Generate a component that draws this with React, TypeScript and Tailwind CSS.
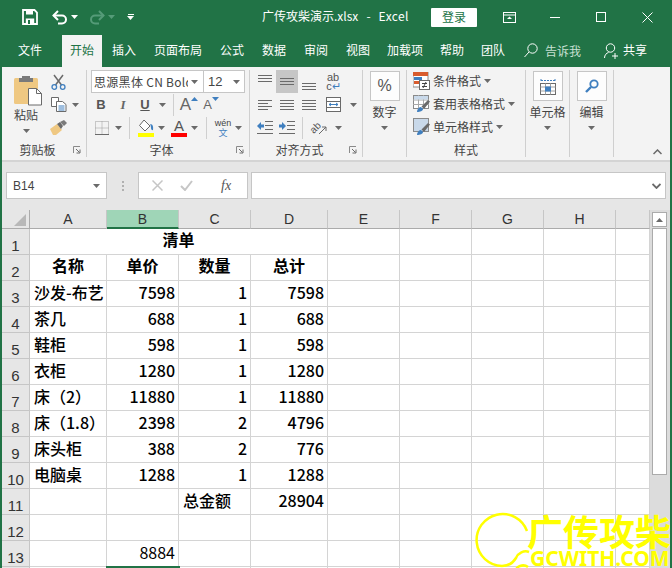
import React from "react";

const Caret = ({ c = "#6a6a6a", className = "" }: { c?: string; className?: string }) => (
  <svg width="7" height="4" viewBox="0 0 7 4" className={`shrink-0 ${className}`}><path d="M0 0h7L3.5 4z" fill={c} /></svg>
);

const Lines = ({ rows }: { rows: [number, number][] }) => (
  <svg width="14" height="16" viewBox="0 0 14 16">
    {rows.map(([y, w], i) => (
      <rect key={i} x={0} y={y} width={w} height="1" fill="#6a6a6a" />
    ))}
  </svg>
);

const Launcher = () => (
  <svg width="8" height="8" viewBox="0 0 8 8">
    <path d="M0.5 7V0.5H7" stroke="#8a8a8a" fill="none" />
    <path d="M3 3l3.5 3.5M3.5 7H7V3.5" stroke="#6a6a6a" fill="none" />
  </svg>
);

const Save = () => (
  <svg width="16" height="16" viewBox="0 0 16 16" fill="none">
    <path d="M1 1h11.5L15 3.5V15H1z" stroke="#fff" strokeWidth="1.8" />
    <rect x="4" y="1" width="7" height="4.5" fill="#fff" />
    <rect x="3.8" y="9.5" width="8.4" height="5.5" fill="#fff" />
    <rect x="6" y="11" width="2" height="4" fill="#217346" />
  </svg>
);

const Undo = ({ c, flip }: { c: string; flip?: boolean }) => (
  <svg width="16" height="15" viewBox="0 0 16 15" fill="none" className={flip ? "-scale-x-100" : ""}>
    <path d="M1.5 5.5H10a4 4 0 0 1 0 8H6" stroke={c} strokeWidth="2" />
    <path d="M6 1L1.5 5.5 6 10" stroke={c} strokeWidth="2" />
  </svg>
);

const Paste = () => (
  <svg width="29" height="31" viewBox="0 0 29 31">
    <rect x="0" y="3" width="24" height="26" rx="1.5" fill="#efc882" />
    <path d="M8 3V1h8v2h3v4H5V3z" fill="#7a7a7a" />
    <path d="M14.5 13.5h8l5 5v11.5h-13z" fill="#fff" stroke="#6a6a6a" />
    <path d="M22.5 13.5v5h5" fill="none" stroke="#6a6a6a" />
  </svg>
);

const Scissors = () => (
  <svg width="15" height="16" viewBox="0 0 15 16" fill="none">
    <path d="M3 1l7.5 10M12 1L4.5 11" stroke="#6a6a6a" strokeWidth="1.5" />
    <circle cx="3.3" cy="13" r="2.3" stroke="#3f7fbf" strokeWidth="1.3" />
    <circle cx="11.7" cy="13" r="2.3" stroke="#3f7fbf" strokeWidth="1.3" />
  </svg>
);

const Copy = () => (
  <svg width="16" height="15" viewBox="0 0 16 15" fill="none">
    <path d="M0.5 0.5h7v9h-7z" fill="#fff" stroke="#6a6a6a" />
    <path d="M5.5 4.5h6l3.5 3v7h-9.500z" fill="#fff" stroke="#6a6a6a" />
    <path d="M7.500 9h6M7.500 11h6M7.500 13h6" stroke="#3f7fbf" />
  </svg>
);

const Brush = () => (
  <svg width="17" height="15" viewBox="0 0 17 15">
    <path d="M0 9l7-5 5 6-6 5H3z" fill="#efc882" />
    <path d="M7 4l3-2 3 4-2 3z" fill="#6a6a6a" />
    <path d="M10 2l4-2 3 3-3 3z" fill="#7a7a7a" />
  </svg>
);

const BordersIcon = () => (
  <svg width="14" height="14" viewBox="0 0 14 14" fill="none">
    <path d="M.5.5h13v13H.5zM7 .5v13M.5 7h13" stroke="#9a9a9a" strokeDasharray="1 1" />
    <path d="M0 13.500h14" stroke="#6a6a6a" />
  </svg>
);

const FillColor = () => (
  <svg width="16" height="18" viewBox="0 0 16 18">
    <path d="M6 1l6 6-5 5-5.500-5.500z" fill="#fff" stroke="#6a6a6a" />
    <path d="M12 5c3 0 3.500 3 3 6-1 .5-2-.5-2-2 0-1.500-.5-3-1-4z" fill="#3f7fbf" />
    <rect x="0" y="14" width="16" height="4" fill="#ffff00" />
  </svg>
);

const Arrow = ({ dir }: { dir: "l" | "r" }) => (
  <svg width="16" height="13" viewBox="0 0 16 13">
    <path d="M8 0.500h8M8 4.500h8M8 8.500h8M0 12.500h16" stroke="#6a6a6a" />
    <path d={dir === "l" ? "M0 5l4-4v2.500h3v3H4V9z" : "M7 5L3 1v2.500H0v3h3V9z"} fill="#3f7fbf" />
  </svg>
);

const Merge = () => (
  <svg width="15" height="15" viewBox="0 0 15 15" fill="none">
    <rect x=".5" y=".5" width="14" height="14" fill="#fff" stroke="#6a6a6a" />
    <path d="M0 4.500h15M0 10.500h15" stroke="#6a6a6a" />
    <path d="M3 7.500h9M3 7.500l2-1.500M3 7.500l2 1.500M12 7.500l-2-1.500M12 7.500l-2 1.500" stroke="#3f7fbf" />
  </svg>
);

const Cond = () => (
  <svg width="17" height="18" viewBox="0 0 17 18">
    <rect x="0" y="0" width="15" height="15" fill="#fff" stroke="#8a8a8a" />
    <rect x="0" y="0" width="15" height="4" fill="#d85c2e" />
    <rect x="1" y="5" width="8" height="3" fill="#3f7fbf" />
    <rect x="1" y="9" width="5" height="3" fill="#d85c2e" />
    <rect x="6.500" y="8.500" width="10" height="9" fill="#fff" stroke="#6a6a6a" />
    <path d="M9 11.500h5M9 14.500h5M10 16l3-6" stroke="#444" fill="none" />
  </svg>
);

const TableBrush = ({ light }: { light?: boolean }) => (
  <svg width="18" height="18" viewBox="0 0 18 18">
    <rect x=".5" y=".5" width="15" height="13" fill={light ? "#c9d9ea" : "#fff"} stroke="#8a8a8a" />
    {!light && <path d="M5.500 0v14M10.500 0v14M0 5h16M0 9.500h16" stroke="#a8a8a8" />}
    {!light && <rect x="1" y="1" width="14" height="3.500" fill="#c9d9ea" />}
    <path d="M4 17c0-3 2-5 4-5l2 2c0 2-3 3-6 3z" fill="#3f7fbf" />
    <path d="M8.500 11.500L15 5l2 1.500-6 7.500z" fill="#6a6a6a" />
  </svg>
);

const CellsIcon = () => (
  <svg width="16" height="17" viewBox="0 0 16 17" fill="none">
    <path d="M1 1v3M15 1v3M1 2.500h14" stroke="#3f7fbf" strokeDasharray="2 1" />
    <rect x=".5" y="5.500" width="15" height="11" fill="#fff" stroke="#6a6a6a" />
    <path d="M.5 9h15M.5 13h15M5.500 5.500v11M10.500 5.500v11" stroke="#a0a0a0" />
    <rect x="5" y="8.500" width="6" height="5" fill="#3f7fbf" />
  </svg>
);

const Magnifier = () => (
  <svg width="14" height="14" viewBox="0 0 14 14" fill="none">
    <circle cx="9" cy="5" r="3.700" stroke="#3f7fbf" strokeWidth="1.800" />
    <path d="M6 8L1 13" stroke="#3f7fbf" strokeWidth="2.400" />
  </svg>
);

const Group = ({ w, children, label, launcher }: { w: string; children: React.ReactNode; label?: string; launcher?: boolean }) => (
  <div className={`${w} h-[87px] shrink-0 flex flex-col border-r border-[#cfcfcf]`}>
    <div className="h-[69px] flex">{children}</div>
    <div className="h-[18px] pt-[4px] flex items-center text-[12px] text-[#444]">
      <span className="flex-1 text-center leading-none">{label}</span>
      {launcher && <span className="mr-[5px] flex"><Launcher /></span>}
    </div>
  </div>
);

const BigButton = ({ w, label, children, pad = "pl-0" }: { w: string; label: string; children: React.ReactNode; pad?: string }) => (
  <div className={`${w} ${pad} flex flex-col items-center`}>
    <div className="w-[30px] h-[30px] mt-[1px] bg-[#fdfdfd] border border-[#c6c6c6] flex items-center justify-center">{children}</div>
    <div className="mt-[2px] text-[12px] leading-[18px] text-[#444] whitespace-nowrap">{label}</div>
    <Caret className="mt-[5px]" />
  </div>
);

const Slot = ({ w, children, bg = "" }: { w: string; children?: React.ReactNode; bg?: string }) => (
  <div className={`${w} ${bg} h-[23px] flex items-center justify-center shrink-0`}>{children}</div>
);

const VSep = () => <div className="w-px h-[22px] bg-[#cfcfcf] shrink-0" />;

const Tab = ({ t, cls }: { t: string; cls: string }) => (
  <div className={`${cls} h-[33px] pb-[2px] flex items-center shrink-0 text-white text-[12px] leading-none`}>{t}</div>
);

const StyleRow = ({ icon, t }: { icon: React.ReactNode; t: string }) => (
  <div className="h-[23px] flex items-center">
    <span className="w-[20px] flex shrink-0">{icon}</span>
    <span className="text-[12px] text-[#444] whitespace-nowrap">{t}</span>
    <Caret className="ml-[3px]" />
  </div>
);

const rows: [string, string, string, string][] = [
  ["沙发-布艺", "7598", "1", "7598"],
  ["茶几", "688", "1", "688"],
  ["鞋柜", "598", "1", "598"],
  ["衣柜", "1280", "1", "1280"],
  ["床（2）", "11880", "1", "11880"],
  ["床（1.8）", "2398", "2", "4796"],
  ["床头柜", "388", "2", "776"],
  ["电脑桌", "1288", "1", "1288"],
];

const cell = "h-[26px] bg-white border-r border-b border-[#d4d4d4] flex items-center text-[16px] text-black whitespace-nowrap leading-none";
const L = `${cell} pb-[4px] pl-[4px] font-medium`;
const R = `${cell} pb-[4px] justify-end pr-[3px] font-medium`;
const C = `${cell} pb-[6px] justify-center font-bold`;
const RowH = ({ n }: { n: number }) => (
  <div className="h-[26px] bg-[#e6e6e6] border-r border-b border-[#c6c6c6] flex items-end justify-center text-[15px] leading-[17px] text-[#333] font-['Liberation_Sans',sans-serif]">{n}</div>
);
const ColH = ({ t, sel }: { t: string; sel?: boolean }) => (
  <div className={`h-[19px] flex items-center justify-center text-[14px] leading-none font-['Liberation_Sans',sans-serif] text-[#333] border-b ${sel ? "bg-[#9fd5b7] border-b-2 border-b-[#217346] border-r border-r-[#c6c6c6]" : "bg-[#e6e6e6] border-b-[#ababab] border-r border-r-[#c6c6c6]"}`}>{t}</div>
);
const Blank = () => <div className={cell} />;
const BlankRest = () => (
  <>
    <Blank /><Blank /><Blank /><Blank /><Blank />
  </>
);

export default function App() {
  return (
    <div className="relative w-[672px] h-[568px] overflow-hidden bg-[#e6e6e6] border-x-2 border-[#217346] font-['Noto_Sans_CJK_SC','Liberation_Sans',sans-serif]">
      {/* Title bar */}
      <div className="h-[34px] -mx-[2px] bg-[#217346] flex items-center text-white">
        <div className="ml-[22px] flex"><Save /></div>
        <div className="ml-[14px] flex"><Undo c="#fff" /></div>
        <Caret c="#fff" className="ml-[3px]" />
        <div className="ml-[11px] flex"><Undo c="#559b78" flip /></div>
        <Caret c="#559b78" className="ml-[3px]" />
        <div className="ml-[12px] flex flex-col items-center gap-[1px]">
          <div className="w-[6px] h-px bg-white" />
          <Caret c="#fff" />
        </div>
        <div className="ml-[128px] w-[165px] pb-[2px] text-[12px] whitespace-pre leading-none">广传攻柴演示.xlsx   -   <span className="tracking-[0.4px]">Excel</span></div>
        <div className="ml-[4px] w-[46px] h-[19px] bg-white text-[#217346] text-[12px] rounded-[1px] flex items-center justify-center">登录</div>
        <div className="ml-[10px] w-[45px] flex justify-center">
          <svg width="13" height="11" viewBox="0 0 13 11" fill="none"><rect x=".5" y=".5" width="12" height="10" stroke="#fff" /><path d="M0 3h13" stroke="#fff" /><path d="M6.500 4.500l-2.500 2.500h5z" fill="#fff" /></svg>
        </div>
        <div className="w-[46px] flex justify-center"><div className="w-[10px] h-px bg-white" /></div>
        <div className="w-[46px] flex justify-center"><div className="w-[10px] h-[10px] border border-white" /></div>
        <div className="w-[46px] flex justify-center">
          <svg width="11" height="11" viewBox="0 0 11 11"><path d="M.5.5l10 10M10.500.5l-10 10" stroke="#fff" /></svg>
        </div>
      </div>
      {/* Tabs */}
      <div className="h-[33px] -mx-[2px] bg-[#217346] flex items-center">
        <Tab t="文件" cls="ml-[18px] w-[24px]" />
        <div className="ml-[20px] w-[40px] h-[32px] mt-[1px] pb-[2px] bg-[#f3f3f3] text-[#217346] text-[12px] flex items-center justify-center leading-none shrink-0">开始</div>
        <Tab t="插入" cls="ml-[10px] w-[24px]" />
        <Tab t="页面布局" cls="ml-[18px] w-[48px]" />
        <Tab t="公式" cls="ml-[18px] w-[24px]" />
        <Tab t="数据" cls="ml-[18px] w-[24px]" />
        <Tab t="审阅" cls="ml-[18px] w-[24px]" />
        <Tab t="视图" cls="ml-[18px] w-[24px]" />
        <Tab t="加载项" cls="ml-[17px] w-[36px]" />
        <Tab t="帮助" cls="ml-[17px] w-[24px]" />
        <Tab t="团队" cls="ml-[17px] w-[24px]" />
        <svg width="14" height="15" viewBox="0 0 14 15" fill="none" className="ml-[19px] shrink-0"><circle cx="8.500" cy="5.500" r="4.700" stroke="#fff" /><path d="M5 9L.5 14" stroke="#fff" /></svg>
        <div className="ml-[7px] w-[36px] text-[12px] leading-none text-[#c8e0d3] shrink-0">告诉我</div>
        <svg width="15" height="16" viewBox="0 0 15 16" fill="none" className="ml-[23px] shrink-0"><circle cx="6.500" cy="5" r="4.200" stroke="#fff" /><path d="M.5 15c0-3 2-5 4-5.500M8 13h6M11 10v6" stroke="#fff" /></svg>
        <div className="ml-[4px] w-[24px] pb-[2px] text-[12px] leading-none text-white shrink-0">共享</div>
      </div>
      {/* Ribbon */}
      <div className="h-[95px] bg-[#f3f3f3] border-b-2 border-[#d4d4d4] pt-[3px] flex">
        <Group w="w-[85px]" label="剪贴板" launcher>
          <div className="w-[48px] flex flex-col items-center">
            <div className="mt-[5px] ml-[5px] flex"><Paste /></div>
            <div className="text-[12px] leading-[18px] text-[#444]">粘贴</div>
            <Caret className="mt-[5px]" />
          </div>
          <div className="flex flex-col">
            <Slot w="w-[17px]"><Scissors /></Slot>
            <div className="flex items-center">
              <Slot w="w-[17px]"><Copy /></Slot>
              <Caret className="ml-[5px]" />
            </div>
            <Slot w="w-[17px]"><Brush /></Slot>
          </div>
        </Group>
        <Group w="w-[163px]" label="字体" launcher>
          <div className="flex flex-col">
            <div className="ml-[4px] h-[23px] flex">
              <div className="w-[113px] h-full bg-white border border-[#c6c6c6] flex items-center text-[12px] text-[#444]">
                <span className="w-[96px] pl-[2px] overflow-hidden whitespace-nowrap tracking-[0.3px]">思源黑体 CN Bold</span>
                <Caret className="ml-[3px]" />
              </div>
              <div className="w-[41px] h-full bg-white border border-[#c6c6c6] border-l-0 flex items-center justify-between px-[4px] text-[13px] text-[#444] font-['Liberation_Sans',sans-serif]">
                12<Caret />
              </div>
            </div>
            <div className="h-[23px] flex items-center">
              <Slot w="ml-[3px] w-[22px]"><span className="text-[13px] font-bold text-[#555] font-['Liberation_Sans',sans-serif]">B</span></Slot>
              <Slot w="w-[22px]"><span className="text-[13px] italic font-bold font-['Liberation_Serif',serif] text-[#666]">I</span></Slot>
              <Slot w="w-[22px]"><span className="text-[13px] font-bold underline text-[#555] font-['Liberation_Sans',sans-serif]">U</span></Slot>
              <Caret className="ml-[3px]" />
              <div className="ml-[7px]"><VSep /></div>
              <Slot w="w-[30px]">
                <span className="text-[17px] text-[#666] font-['Liberation_Sans',sans-serif]">A</span>
                <svg width="7" height="4" viewBox="0 0 7 4" className="mb-[12px]"><path d="M0 4h7L3.500 0z" fill="#3f7fbf" /></svg>
              </Slot>
              <Slot w="w-[14px]">
                <span className="text-[13px] text-[#666] font-['Liberation_Sans',sans-serif]">A</span>
                <svg width="7" height="4" viewBox="0 0 7 4" className="mb-[12px] shrink-0"><path d="M0 0h7L3.500 4z" fill="#3f7fbf" /></svg>
              </Slot>
            </div>
            <div className="h-[23px] flex items-center">
              <div className="ml-[8px] w-[14px] flex"><BordersIcon /></div>
              <Caret className="ml-[6px]" />
              <div className="ml-[7px]"><VSep /></div>
              <div className="ml-[8px] flex"><FillColor /></div>
              <Caret className="ml-[4px]" />
              <div className="ml-[6px] w-[16px] h-[18px] flex flex-col items-center">
                <span className="h-[14px] text-[15px] leading-[14px] text-[#555] font-['Liberation_Sans',sans-serif]">A</span>
                <div className="w-[16px] h-[4px] bg-[#ff0000]" />
              </div>
              <Caret className="ml-[4px]" />
              <div className="ml-[8px]"><VSep /></div>
              <div className="ml-[5px] w-[22px] flex flex-col items-center leading-none">
                <span className="text-[9px] text-[#444] leading-[10px] font-['Liberation_Sans',sans-serif]">wén</span>
                <span className="text-[9px] text-[#3f7fbf] leading-[10px]">文</span>
              </div>
              <Caret className="ml-[1px]" />
            </div>
          </div>
        </Group>
        <Group w="w-[113px]" label="对齐方式" launcher>
          <div className="ml-[4px] flex flex-col">
            <div className="h-[23px] flex">
              <Slot w="w-[22px]"><Lines rows={[[1, 14], [4, 14], [7, 14]]} /></Slot>
              <Slot w="w-[22px]" bg="bg-[#c6c6c6]"><Lines rows={[[4, 14], [7, 14], [10, 14]]} /></Slot>
              <Slot w="w-[22px]"><Lines rows={[[9, 14], [12, 14], [15, 14]]} /></Slot>
              <Slot w="w-[26px]">
                <div className="flex flex-col items-center text-[11px] leading-[9px] text-[#555] font-['Liberation_Sans',sans-serif]">
                  <span>ab</span>
                  <span className="self-start ml-[1px]">c<span className="text-[#3f7fbf]">↵</span></span>
                </div>
              </Slot>
            </div>
            <div className="h-[23px] flex">
              <Slot w="w-[22px]"><Lines rows={[[3, 14], [6, 10], [9, 14], [12, 10]]} /></Slot>
              <Slot w="w-[22px]"><Lines rows={[[3, 14], [6, 14], [9, 14], [12, 14]]} /></Slot>
              <Slot w="w-[22px]"><Lines rows={[[3, 14], [6, 14], [9, 14], [12, 14]]} /></Slot>
              <Slot w="w-[26px]"><Merge /></Slot>
              <Slot w="w-[14px]"><Caret /></Slot>
            </div>
            <div className="h-[23px] flex items-center">
              <Slot w="w-[22px]"><Arrow dir="l" /></Slot>
              <Slot w="w-[22px]"><Arrow dir="r" /></Slot>
              <div className="ml-[4px]"><VSep /></div>
              <div className="ml-[7px] w-[22px] flex items-center">
                <span className="-rotate-45 text-[10px] leading-none text-[#555] font-['Liberation_Sans',sans-serif]">ab</span>
                <svg width="8" height="8" viewBox="0 0 8 8" className="-ml-[2px] mt-[4px]"><path d="M0 8l7-7M3 1h4v4" stroke="#6a6a6a" fill="none" /></svg>
              </div>
              <Caret className="ml-[3px]" />
            </div>
          </div>
        </Group>
        <Group w="w-[44px]">
          <BigButton w="w-full" label="数字"><span className="text-[16px] text-[#555] font-['Liberation_Sans',sans-serif]">%</span></BigButton>
        </Group>
        <Group w="w-[119px]" label="样式">
          <div className="ml-[6px] -mt-[1px] flex flex-col">
            <StyleRow icon={<Cond />} t="条件格式" />
            <StyleRow icon={<TableBrush />} t="套用表格格式" />
            <StyleRow icon={<TableBrush light />} t="单元格样式" />
          </div>
        </Group>
        <Group w="w-[44px]">
          <BigButton w="w-full" label="单元格"><CellsIcon /></BigButton>
        </Group>
        <Group w="w-[44px]">
          <BigButton w="w-full" label="编辑"><Magnifier /></BigButton>
        </Group>
        <div className="flex-1 flex justify-end items-end pb-[5px] pr-[8px]">
          <svg width="9" height="6" viewBox="0 0 9 6" fill="none"><path d="M.500 5l4-4 4 4" stroke="#6a6a6a" strokeWidth="1.500" /></svg>
        </div>
      </div>
      {/* Formula bar */}
      <div className="h-[48px] flex items-start pt-[10px]">
        <div className="ml-[4px] w-[101px] h-[27px] bg-white border border-[#c6c6c6] flex items-center justify-between pl-[6px] pr-[6px] text-[12px] text-[#444] font-['Liberation_Sans',sans-serif]">
          B14<Caret />
        </div>
        <div className="w-[31px] h-[27px] flex flex-col items-center justify-center gap-[2px]">
          <div className="w-[2px] h-[2px] bg-[#b0b0b0]" />
          <div className="w-[2px] h-[2px] bg-[#b0b0b0]" />
          <div className="w-[2px] h-[2px] bg-[#b0b0b0]" />
        </div>
        <div className="w-[110px] h-[27px] bg-white border border-[#c6c6c6] flex items-center">
          <svg width="11" height="11" viewBox="0 0 11 11" className="ml-[13px]"><path d="M.5.5l10 10M10.500.5l-10 10" stroke="#c6c6c6" strokeWidth="1.500" /></svg>
          <svg width="13" height="11" viewBox="0 0 13 11" className="ml-[17px]" fill="none"><path d="M1 6l4 4 7-9" stroke="#c6c6c6" strokeWidth="2" /></svg>
          <span className="ml-[28px] text-[14px] italic font-['Liberation_Serif',serif] text-[#555]">fx</span>
        </div>
        <div className="ml-[3px] w-[415px] h-[27px] bg-white border border-[#c6c6c6] flex items-center justify-end pr-[4px]">
          <svg width="9" height="6" viewBox="0 0 9 6" fill="none"><path d="M.500 1l4 4 4-4" stroke="#6a6a6a" strokeWidth="1.800" /></svg>
        </div>
      </div>
      {/* Sheet */}
      <div className="flex h-[358px] overflow-hidden">
        <div className="w-[648px] shrink-0 grid grid-cols-[28px_77px_72px_72px_77px_72px_72px_72px_72px_34px] auto-rows-min content-start border-r border-[#ababab]">
          <div className="h-[19px] bg-[#e6e6e6] border-r border-b border-[#ababab] flex items-end justify-end pr-[3px] pb-[2px]">
            <svg width="12" height="12" viewBox="0 0 12 12"><path d="M12 0v12H0z" fill="#b8b8b8" /></svg>
          </div>
          <ColH t="A" />
          <ColH t="B" sel />
          <ColH t="C" />
          <ColH t="D" />
          <ColH t="E" />
          <ColH t="F" />
          <ColH t="G" />
          <ColH t="H" />
          <ColH t="" />

          <RowH n={1} />
          <div className={`${C} col-span-4`}>清单</div>
          <BlankRest />

          <RowH n={2} />
          <div className={C}>名称</div>
          <div className={C}>单价</div>
          <div className={C}>数量</div>
          <div className={C}>总计</div>
          <BlankRest />

          {rows.map((r, i) => (
            <React.Fragment key={i}>
              <RowH n={i + 3} />
              <div className={L}>{r[0]}</div>
              <div className={R}>{r[1]}</div>
              <div className={R}>{r[2]}</div>
              <div className={R}>{r[3]}</div>
              <BlankRest />
            </React.Fragment>
          ))}

          <RowH n={11} />
          <Blank />
          <Blank />
          <div className={L}>总金额</div>
          <div className={R}>28904</div>
          <BlankRest />

          <RowH n={12} />
          <Blank /><Blank /><Blank /><Blank />
          <BlankRest />

          <RowH n={13} />
          <Blank />
          <div className={`${cell} pb-[4px] justify-end pr-[3px]`}>8884</div>
          <Blank /><Blank />
          <BlankRest />

          <RowH n={14} />
          <Blank />
          <div className="h-[26px] -mt-[1px] -mx-[1px] bg-white border-2 border-[#217346] relative z-10" />
          <Blank /><Blank />
          <BlankRest />
        </div>
        <div className="flex-1 bg-[#dcdcdc] flex flex-col items-center pt-[2px] pr-[1px]">
          <div className="w-[15px] h-[15px] bg-white border border-[#ababab] flex items-center justify-center">
            <svg width="7" height="4" viewBox="0 0 7 4"><path d="M0 4h7L3.500 0z" fill="#6a6a6a" /></svg>
          </div>
          <div className="mt-[1px] w-[15px] h-[247px] bg-white border border-[#ababab]" />
        </div>
      </div>
      {/* Watermark overlay */}
      <svg width="60" height="60" viewBox="0 0 60 60" fill="none" className="absolute left-[470px] top-[510px]" style={{ overflow: "visible" }}>
        <path d="M55 21A26 26 0 1 0 30 56c6 0 11-3 14-8 2-5 8-8 13-6" stroke="#ffff00" strokeWidth="2.500" />
        <path d="M56 57c-4-3-13-2-13 7" stroke="#ffff00" strokeWidth="2.500" />
      </svg>
      <div className="absolute left-[525px] top-[512px] w-[150px] whitespace-nowrap text-[36px] leading-[36px] font-bold text-[#ffff00]">广传攻柴</div>
      <div className="absolute left-[528px] top-[548px] whitespace-nowrap text-[21px] leading-[20px] font-bold text-[#ffff00] font-['Noto_Sans',sans-serif]">GCWITH.COM</div>
    </div>
  );
}
